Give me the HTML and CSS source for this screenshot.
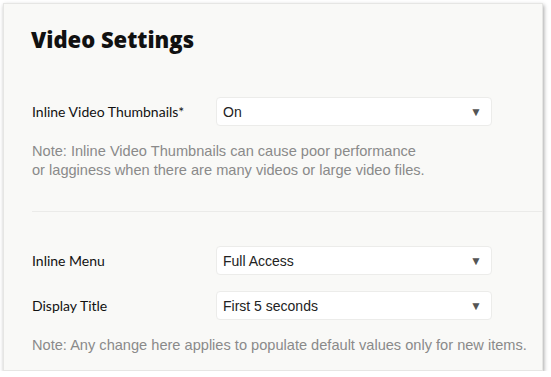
FILE: index.html
```html
<!DOCTYPE html>
<html lang="en">
<head>
    <meta charset="UTF-8">
    <title>Video Settings</title>
    <link rel="stylesheet" href="styles.css">
</head>
<body>
    <div class="panel">
        <h1 class="title">Video Settings</h1>

        <div class="field">
            <label class="field-label">Inline Video Thumbnails*</label>
            <div class="select">
                <span>On</span>
                <span class="arrow">&#9660;</span>
            </div>
        </div>
        <p class="note">Note: Inline Video Thumbnails can cause poor performance<br>or lagginess when there are many videos or large video files.</p>

        <hr class="divider">

        <div class="field">
            <label class="field-label">Inline Menu</label>
            <div class="select">
                <span>Full Access</span>
                <span class="arrow">&#9660;</span>
            </div>
        </div>
        <div class="field field-next">
            <label class="field-label">Display Title</label>
            <div class="select">
                <span>First 5 seconds</span>
                <span class="arrow">&#9660;</span>
            </div>
        </div>
        <p class="note note-last">Note: Any change here applies to populate default values only for new items.</p>
    </div>
</body>
</html>
```

FILE: styles.css
```css
body {
    margin: 0;
    padding: 0;
    background-color: #ffffff;
    font-family: 'Liberation Sans', Arial, sans-serif;
    color: #222;
}
.panel {
    margin: 3px 0 0 3px;
    width: 540px;
    height: 368px;
    box-sizing: border-box;
    padding: 21px 0 0 28px;
    background-color: #f9f9f7;
    border: 1px solid #e6e6e4;
    box-shadow: 1px 2px 4px rgba(0, 0, 0, 0.35);
}
.title {
    margin: 0 0 44px -1px;
    font-family: 'Open Sans', sans-serif;
    font-weight: 800;
    font-size: 22px;
    line-height: 28px;
    color: #111;
}
.field {
    display: flex;
    align-items: center;
    width: 460px;
}
.field-next {
    margin-top: 16px;
}
.field-label {
    width: 184px;
    font-family: 'Lato', sans-serif;
    font-size: 14px;
    color: #111;
}
.select {
    flex: 1;
    height: 29px;
    box-sizing: border-box;
    display: flex;
    align-items: center;
    justify-content: space-between;
    padding: 0 9px 0 6px;
    background-color: #ffffff;
    border: 1px solid #ececea;
    border-radius: 4px;
    font-size: 14px;
    color: #222;
}
.arrow {
    font-size: 12px;
    color: #555;
}
.note {
    margin: 16px 0 0 0;
    font-size: 14.6px;
    line-height: 19px;
    color: #8a8a8a;
}
.note-last {
    margin-top: 16px;
}
.divider {
    margin: 31px 0 34px 0;
    border: 0;
    border-top: 1px solid #ebebe9;
}
```
